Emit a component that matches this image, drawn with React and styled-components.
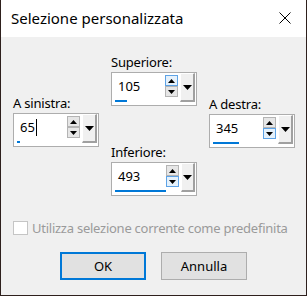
import React from 'react';
import styled, { createGlobalStyle } from 'styled-components';

const GlobalStyle = createGlobalStyle`
  * { box-sizing: border-box; }
  body {
    margin: 0;
    background: #2e201d;
    font-family: "Noto Sans", "Open Sans", sans-serif;
  }
`;

const Window = styled.div`
  width: 305px;
  height: 295px;
  margin-left: 1px;
  background: #f0f0f0;
  display: flex;
  flex-direction: column;
`;

const TitleBar = styled.div`
  height: 37px;
  background: #fff;
  display: flex;
  align-items: center;
  justify-content: space-between;
  padding: 0 15px 0 10px;
`;

const Title = styled.span`
  font-size: 15px;
  color: #000;
  margin-top: -1px;
`;

const CloseIcon = styled.svg`
  width: 12px;
  height: 12px;
  margin-top: -1px;
`;

const Fields = styled.div`
  display: flex;
  gap: 12px;
  padding-left: 12px;
`;

const Column = styled.div`
  width: 86px;
  display: flex;
  flex-direction: column;
  padding-top: ${p => p.$top}px;
`;

const Label = styled.div`
  font-size: 13px;
  letter-spacing: -0.2px;
  line-height: 20px;
  height: 20px;
  color: #000;
  margin-top: ${p => p.$gap || 0}px;
`;

const Spin = styled.div`
  height: 34px;
  border: 1px solid #adadad;
  background: #fff;
  display: flex;
  align-items: flex-start;
`;

const FieldCol = styled.div`
  flex: 1;
  display: flex;
  flex-direction: column;
`;

const Value = styled.div`
  height: 27px;
  line-height: 27px;
  padding-left: 6px;
  font-size: 13px;
  color: #000;
  display: flex;
  align-items: center;
`;

const Caret = styled.span`
  display: inline-block;
  width: 1px;
  height: 17px;
  background: #000;
  margin-left: 1px;
`;

const Track = styled.div`
  height: 2px;
  margin-left: 3px;
`;

const Bar = styled.div`
  height: 100%;
  background: #0078d7;
`;

const Arrows = styled.div`
  display: flex;
  flex-direction: column;
  margin-top: 2px;
`;

const ArrowBtn = styled.div`
  width: 13px;
  height: 11px;
  border: 1px solid ${p => (p.$hot ? '#5ea3e6' : '#b4b4b4')};
  background: ${p => (p.$hot ? '#e5f1fb' : '#e6e6e6')};
  display: flex;
  align-items: center;
  justify-content: center;
`;

const DropBtn = styled.div`
  width: 15px;
  height: 29px;
  margin: 0 1px 0 2px;
  background: #f0f0f0;
  border-top: 1px solid #fff;
  border-left: 1px solid #fff;
  border-right: 2px solid #a0a0a0;
  border-bottom: 2px solid #a0a0a0;
  display: flex;
  align-items: center;
  justify-content: center;
`;

const CheckRow = styled.label`
  display: flex;
  align-items: center;
  gap: 4px;
  padding-left: 12px;
  margin-top: 22px;
  height: 20px;
  font-size: 13px;
  letter-spacing: -0.25px;
  white-space: nowrap;
  color: #9a9a9a;
`;

const CheckBox = styled.span`
  width: 15px;
  height: 14px;
  border: 1px solid #c5c5c5;
  background: #fff;
`;

const Buttons = styled.div`
  display: flex;
  justify-content: center;
  gap: 15px;
  margin-top: 14px;
`;

const Button = styled.button`
  width: 86px;
  height: 28px;
  font-family: inherit;
  font-size: 13px;
  color: #000;
  background: #e1e1e1;
  border: ${p => (p.$default ? '2px solid #0078d7' : '1px solid #adadad')};
  padding: 0;
`;

const Tri = ({ down, w = 7, h = 4 }) => (
  <svg width={w} height={h} viewBox={`0 0 ${w} ${h}`}>
    <polygon
      points={down ? `0,0 ${w},0 ${w / 2},${h}` : `0,${h} ${w},${h} ${w / 2},0`}
      fill="#000"
    />
  </svg>
);

const SpinBox = ({ value, bar, hot, caret }) => (
  <Spin>
    <FieldCol>
      <Value>
        {value}
        {caret && <Caret />}
      </Value>
      <Track>
        <Bar style={{ width: bar }} />
      </Track>
    </FieldCol>
    <Arrows>
      <ArrowBtn $hot={hot === 'up'}><Tri /></ArrowBtn>
      <ArrowBtn $hot={hot === 'down'}><Tri down /></ArrowBtn>
    </Arrows>
    <DropBtn><Tri down w={9} h={5} /></DropBtn>
  </Spin>
);

export default function App() {
  return (
    <>
      <GlobalStyle />
      <Window>
        <TitleBar>
          <Title>Selezione personalizzata</Title>
          <CloseIcon viewBox="0 0 12 12">
            <path d="M0.5 0.5 L11.5 11.5 M11.5 0.5 L0.5 11.5" stroke="#000" strokeWidth="1" />
          </CloseIcon>
        </TitleBar>
        <Fields>
          <Column $top={56}>
            <Label>A sinistra:</Label>
            <SpinBox value="65" bar={3} caret />
          </Column>
          <Column $top={15}>
            <Label>Superiore:</Label>
            <SpinBox value="105" bar={12} hot="up" />
            <Label $gap={36}>Inferiore:</Label>
            <SpinBox value="493" bar={51} hot="down" />
          </Column>
          <Column $top={57}>
            <Label>A destra:</Label>
            <SpinBox value="345" bar={26} hot="down" />
          </Column>
        </Fields>
        <CheckRow>
          <CheckBox />
          Utilizza selezione corrente come predefinita
        </CheckRow>
        <Buttons>
          <Button $default>OK</Button>
          <Button>Annulla</Button>
        </Buttons>
      </Window>
    </>
  );
}
